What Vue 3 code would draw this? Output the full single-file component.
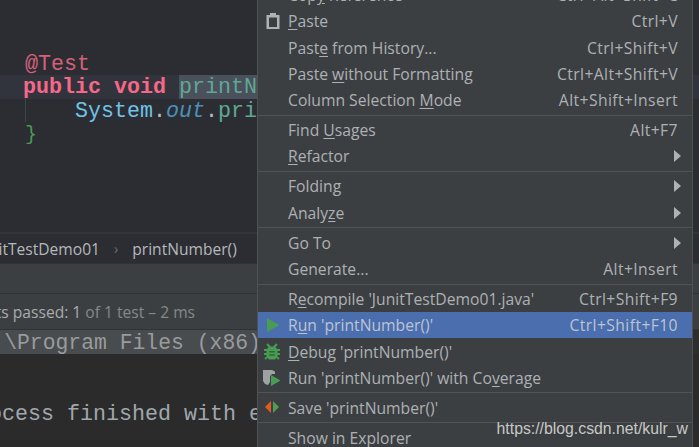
<script setup>
const groups = [
  [
    { pre: 'Cop', u: 'y', post: ' Reference', key: 'Ctrl+Alt+Shift+C' },
    { pre: '', u: 'P', post: 'aste', key: 'Ctrl+V', icon: 'paste' },
    { pre: 'Past', u: 'e', post: ' from History...', key: 'Ctrl+Shift+V' },
    { pre: 'Paste ', u: 'w', post: 'ithout Formatting', key: 'Ctrl+Alt+Shift+V' },
    { pre: 'Column Selection ', u: 'M', post: 'ode', key: 'Alt+Shift+Insert' },
  ],
  [
    { pre: 'Find ', u: 'U', post: 'sages', key: 'Alt+F7' },
    { pre: '', u: 'R', post: 'efactor', arrow: true },
  ],
  [
    { pre: 'Folding', u: '', post: '', arrow: true },
    { pre: 'Analy', u: 'z', post: 'e', arrow: true },
  ],
  [
    { pre: 'Go To', u: '', post: '', arrow: true },
    { pre: 'Generate...', u: '', post: '', key: 'Alt+Insert' },
  ],
  [
    { pre: 'R', u: 'e', post: "compile 'JunitTestDemo01.java'", key: 'Ctrl+Shift+F9' },
    { pre: 'R', u: 'u', post: "n 'printNumber()'", key: 'Ctrl+Shift+F10', icon: 'run', active: true },
    { pre: '', u: 'D', post: "ebug 'printNumber()'", icon: 'debug' },
    { pre: "Run 'printNumber()' with Co", u: 'v', post: 'erage', icon: 'coverage' },
  ],
  [{ pre: "Save 'printNumber()'", u: '', post: '', icon: 'save' }],
  [{ pre: 'Show in Explorer', u: '', post: '' }],
]
</script>

<template>
  <div class="page">
    <section class="editor">
      <div class="code">
        <div class="line annotation">@Test</div>
        <div class="line current">
          <b class="keyword">public void</b> <span class="method">printNumber</span>
        </div>
        <div class="line body"><span class="guide"></span><span class="cls">System</span><span class="dot">.</span><i class="field">out</i><span class="dot">.</span><span class="method-plain">println</span></div>
        <div class="line close">}</div>
      </div>
    </section>
    <nav class="crumbs">
      <span class="crumb-clip"><span>JunitTestDemo01</span></span>
      <span class="crumb-sep">›</span>
      <span>printNumber()</span>
    </nav>
    <div class="tool-head"></div>
    <div class="status"><span class="status-clip"><em>Tests passed: 1</em> of 1 test – 2 ms</span></div>
    <div class="cmd">C:\Program Files (x86)\Java\jdk1.8.0\bin</div>
    <div class="console">Process finished with exit code 0</div>

    <div class="menu">
      <div v-for="(group, g) in groups" :key="g" class="group">
        <div v-for="item in group" :key="item.pre + item.post" class="row" :class="{ active: item.active }">
          <span class="icon">
            <svg v-if="item.icon === 'paste'" width="16" height="18" viewBox="0 0 16 18">
              <path d="M5 1h6v2h3.500v14h-13V3H5z" fill="#afb1b3" />
              <path d="M4 5.500h8v9.500H4z" fill="#3c3f41" />
            </svg>
            <svg v-else-if="item.icon === 'run'" width="14" height="16" viewBox="0 0 14 16">
              <path d="M1 1l12.500 7L1 15z" fill="#499c54" />
            </svg>
            <svg v-else-if="item.icon === 'debug'" width="18" height="18" viewBox="0 0 18 18" class="shift">
              <path d="M4 1l3 3M14 1l-3 3M1 7h3M17 7h-3M1 11h3M17 11h-3M2 16l3-2.500M16 16l-3-2.500" stroke="#499c54" stroke-width="2" fill="none" />
              <path d="M6 3.500h6l2.500 3v6.500L12 16.500H6L3.500 13V6.500z" fill="#499c54" />
              <path d="M6 8h6v1.500H6zM6 11.200h6v1.500H6z" fill="#2f6b38" />
            </svg>
            <svg v-else-if="item.icon === 'coverage'" width="20" height="18" viewBox="0 0 20 18" class="shift">
              <path d="M1 1h9l3 1.500V5h-3L8 7v6l-2 3-3-1-2-3z" fill="#9fa2a4" />
              <path d="M9 6l9.500 5.500L9 17z" fill="#499c54" />
            </svg>
            <svg v-else-if="item.icon === 'save'" width="16" height="13" viewBox="0 0 16 13" class="shift">
              <path d="M7 0v12L1 6z" fill="#e05a24" />
              <path d="M9 0v12l6-6z" fill="#4f9e4f" />
            </svg>
          </span>
          <span class="label">{{ item.pre }}<u>{{ item.u }}</u>{{ item.post }}</span>
          <span v-if="item.key" class="key">{{ item.key }}</span>
          <span v-if="item.arrow" class="arrow"></span>
        </div>
      </div>
    </div>

    <div class="watermark">https://blog.csdn.net/kulr_w</div>
  </div>
</template>

<style>
html, body { margin: 0; background: #2b2d33; }
</style>

<style scoped>
.page {
  position: relative;
  width: 699px;
  height: 447px;
  overflow: hidden;
  display: flex;
  flex-direction: column;
  background: #2e2e2e;
  font-family: "Open Sans", "Noto Sans", sans-serif;
}
.editor {
  height: 234px;
  flex: none;
  background: #2b2d33;
  padding-top: 52px;
  box-sizing: border-box;
  border-bottom: 2px solid #323437;
}
.code {
  font-family: "Liberation Mono", monospace;
  font-size: 21.67px;
  white-space: pre;
}
.line {
  height: 23.400px;
  line-height: 26px;
  padding-left: 23px;
}
.annotation { color: #d4607a; padding-left: 25px; }
.current { background: #31343c; }
.keyword { color: #f76888; }
.method { color: #5fa893; background: #4a505c; display: inline-block; height: 23.400px; }
.body { position: relative; padding-left: 75px; }
.guide { position: absolute; left: 25px; top: 0; bottom: 0; width: 1px; background: #3b4a42; }
.cls { color: #6fc3e6; }
.dot { color: #b9bcc0; }
.field { color: #4a90b8; }
.method-plain { color: #5fa893; }
.close { color: #4b9a55; padding-left: 25px; font-size: 20px; }
.crumbs {
  flex: none;
  height: 29px;
  display: flex;
  align-items: center;
  gap: 14px;
  background: #2b2d33;
  color: #b6b8ba;
  font-size: 15.600px;
  box-sizing: border-box;
}
.crumb-clip { width: 100px; display: flex; justify-content: flex-end; overflow: hidden; white-space: nowrap; }
.crumb-sep { color: #6a6d70; font-size: 14px; }
.tool-head {
  flex: none;
  height: 29px;
  background: #3c3f41;
  border-top: 1px solid #323232;
  border-bottom: 1px solid #323232;
}
.status {
  flex: none;
  height: 36px;
  background: #3c3f41;
  border-bottom: 1px solid #323232;
  box-sizing: border-box;
  display: flex;
  justify-content: flex-end;
  align-items: center;
  padding-right: 504px;
  overflow: hidden;
  white-space: nowrap;
  color: #85888b;
  font-size: 15.600px;
}
.status-clip { flex: none; }
.status em { font-style: normal; color: #a9abad; }
.cmd {
  flex: none;
  height: 24px;
  background: #494c4e;
  color: #989b9d;
  font-family: "Liberation Mono", monospace;
  font-size: 21.400px;
  line-height: 27px;
  white-space: nowrap;
  overflow: hidden;
  padding-left: 4px;
  margin-left: -25.500px;
  margin-right: 7px;
}
.console {
  flex: 1;
  padding-top: 48px;
  color: #a0a7ad;
  font-family: "Liberation Mono", monospace;
  font-size: 21.67px;
  white-space: nowrap;
  margin-left: -37px;
  background: #2b2b2b;
}
.menu {
  position: absolute;
  top: -19.500px;
  left: 257px;
  width: 436px;
  background: #3c3f41;
  border-left: 1px solid #515151;
  border-right: 1px solid #515151;
  box-sizing: border-box;
  color: #adb1b5;
  font-size: 15.700px;
}
.group { border-bottom: 1px solid #515456; padding: 1.350px 0; }
.group:last-child { border-bottom: 0; }
.row {
  height: 26.300px;
  display: flex;
  align-items: center;
  padding-right: 14px;
  white-space: nowrap;
}
.row.active { background: #4b6eaf; color: #bcc4d2; }
.icon {
  width: 30px;
  flex: none;
  display: flex;
  justify-content: center;
}
.icon .shift { margin-left: -2px; }
.label { flex: 1; }
.label u { text-underline-offset: 2px; }
.key { flex: none; letter-spacing: 0.400px; }
.arrow {
  width: 0;
  height: 0;
  margin-right: -3px;
  border-left: 7px solid #afb1b3;
  border-top: 6px solid transparent;
  border-bottom: 6px solid transparent;
}
.watermark {
  position: absolute;
  right: 11px;
  bottom: 9px;
  color: #c8c8c8;
  font-family: "Liberation Sans", sans-serif;
  font-size: 15.800px;
  text-shadow: 0 0 2px #3c3f41;
}
</style>
